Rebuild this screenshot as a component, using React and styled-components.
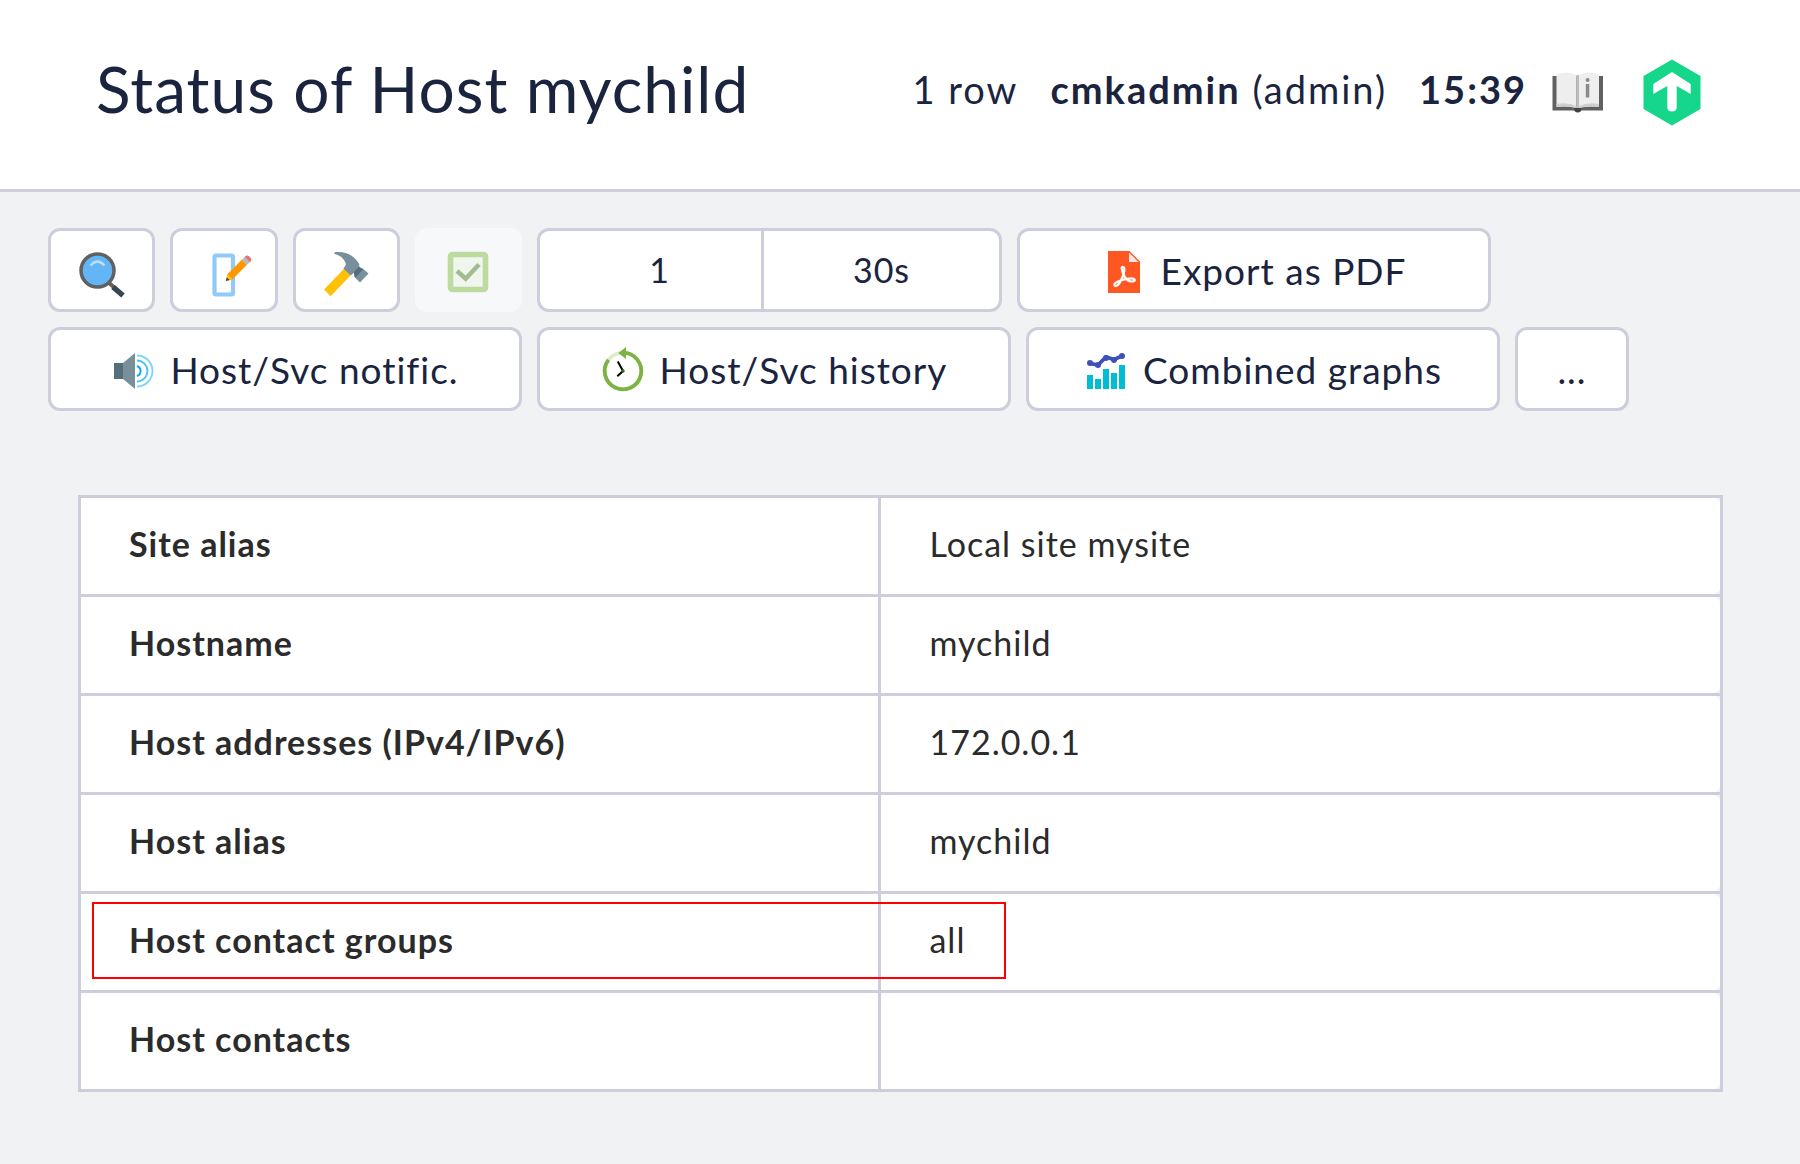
import React from "react";
import styled, { createGlobalStyle } from "styled-components";

const line = "#cdcddc";
const ink = "#1a243e";
const canvas = "#f0f2f4";
const labelColumn = "48.75%";

const GlobalStyle = createGlobalStyle`
  *, *::before, *::after { box-sizing: border-box; }
  body {
    margin: 0;
    background: ${canvas};
    color: ${ink};
    font-family: Lato, "Open Sans", sans-serif;
    font-size: 37px;
    letter-spacing: 1px;
  }
`;

const Header = styled.header`
  display: flex;
  align-items: center;
  justify-content: space-between;
  min-height: 192px;
  padding: 0 99px 12px 96px;
  background: #fff;
  border-bottom: 3px solid ${line};
`;

const Title = styled.h1`
  margin: 0;
  font-size: 64px;
  font-weight: 400;
`;

const HeaderInfo = styled.div`
  display: flex;
  align-items: center;
  gap: 32px;
  font-size: 38px;
  letter-spacing: 2px;
`;

const HeaderIcons = styled.div`
  display: flex;
  align-items: center;
  gap: 38px;
  margin: 8px 0 0 -8px;
`;

const IconLink = styled.a`
  display: flex;
`;

const Toolbar = styled.nav`
  display: flex;
  flex-direction: column;
  gap: 15px;
  padding: 36px 48px 0;
`;

const ToolRow = styled.div`
  display: flex;
  gap: 15px;
`;

const IconGroup = styled.div`
  display: flex;
  gap: 15px;
  width: 474px;
`;

const Button = styled.button`
  display: flex;
  align-items: center;
  justify-content: center;
  gap: 15px;
  height: 84px;
  padding: 0;
  border: 3px solid ${line};
  border-radius: 12px;
  background: #fff;
  color: inherit;
  font: inherit;
  letter-spacing: inherit;
  white-space: nowrap;
`;

const IconButton = styled(Button)`
  flex: 1;
  &:disabled {
    border-color: #f7f8fa;
    background: #f7f8fa;
  }
`;

const WideButton = styled(Button)`
  width: 474px;
`;

const MoreButton = styled(Button)`
  width: 114px;
`;

const Segments = styled.div`
  display: grid;
  grid-template-columns: 221fr 238fr;
  width: 465px;
  height: 84px;
  border: 3px solid ${line};
  border-radius: 12px;
  background: #fff;
  overflow: hidden;
`;

const Segment = styled.button`
  padding: 0 0 2px 18px;
  border: 0;
  background: none;
  color: inherit;
  font: inherit;
  font-size: 34px;
  letter-spacing: inherit;
  & + & {
    padding: 0 0 2px;
    border-left: 3px solid ${line};
  }
`;

const Main = styled.main`
  padding: 84px 77px 72px 78px;
`;

const Table = styled.table`
  width: 100%;
  table-layout: fixed;
  border-collapse: collapse;
  background: #fff;
  color: #2b2b2b;
  font-size: 34px;
  text-align: left;
`;

const Row = styled.tr`
  position: relative;
  height: 99px;
`;

const Label = styled.th`
  width: ${labelColumn};
  padding: 0 48px 6px;
  border: 3px solid ${line};
  font-weight: 700;
`;

const Value = styled.td`
  padding: 0 48px 6px;
  border: 3px solid ${line};
  background:
    radial-gradient(circle at 0 100%, #fff 8px, ${canvas} 9px) top right / 8px 8px no-repeat,
    radial-gradient(circle at 0 0, #fff 8px, ${canvas} 9px) bottom right / 8px 8px no-repeat;
`;

const Marker = styled.span`
  position: absolute;
  top: 9px;
  left: 12px;
  width: calc(${labelColumn} + 114px);
  height: 77px;
  border: 2px solid #f00;
  pointer-events: none;
`;

const Svg = styled.svg`
  display: block;
  flex: none;
  overflow: visible;
`;

const SearchIcon = () => (
  <Svg width="60" height="60" viewBox="0 0 60 60" fill="none">
    <path d="M36 42L44 49" stroke="#616161" strokeWidth="4" />
    <path d="M41 47L51 55.500" stroke="#37474f" strokeWidth="5.500" />
    <circle cx="25.500" cy="30.500" r="16.500" fill="#64b5f6" stroke="#616161" strokeWidth="3.500" />
    <path d="M18.500 25.500Q25.500 17.500 32.500 25.500" stroke="#bbdefb" strokeWidth="2.500" />
  </Svg>
);

const EditIcon = () => (
  <Svg width="60" height="60" viewBox="0 0 60 60">
    <rect x="20.500" y="15.500" width="18.500" height="39" rx="1.500" fill="#fff" stroke="#90caf9" strokeWidth="4.200" />
    <path d="M31.800 41L33.600 34L48 19.600L53 24.800L38.600 39.200Z" fill="#ff9800" />
    <path d="M31.800 41L33.600 34L38.600 39.200Z" fill="#ffc107" />
    <path d="M31.800 41L32.800 37.500L35.600 40Z" fill="#37474f" />
    <path d="M48 19.600L50.600 17L55.800 22.200L53 24.800Z" fill="#b0bec5" />
    <path d="M50.600 17L52 15.800Q53.600 14.800 55 16.200L56.800 18Q58 19.500 57 21L55.800 22.200Z" fill="#e57373" />
  </Svg>
);

const HammerIcon = () => (
  <Svg width="60" height="60" viewBox="0 0 60 60">
    <path d="M8 49.500L14.600 56.300L34.500 35.500L28 28.800Z" fill="#ffc107" />
    <path d="M46 28L52.500 33.500L44 42.400L38 36.500Z" fill="#78909c" />
    <path d="M18.500 12.200C31 11 38 16 43.300 24L43 29L34.500 35.500L27.500 28.800L30 24.300C28 18 24 15.500 18.500 14Z" fill="#78909c" />
    <path d="M43 26.500L47 29.500L39.500 37.500Q37.500 35 38 32Z" fill="#546e7a" />
  </Svg>
);

const CheckIcon = () => (
  <Svg width="60" height="60" viewBox="0 0 60 60" fill="none">
    <rect x="12.500" y="14.500" width="35" height="35" rx="2" fill="#f0f5ee" stroke="#bddb9e" strokeWidth="5.600" />
    <path d="M19 31L27.700 38.700L41 24.500" stroke="#a1bd8f" strokeWidth="4.500" />
  </Svg>
);

const PdfIcon = () => (
  <Svg width="44" height="44" viewBox="0 0 44 44" fill="none">
    <path d="M6 3H27.500L38 13.500V45H6Z" fill="#ff5722" />
    <path d="M27 4.500V14H36.500Z" fill="#fbe9e7" />
    <path d="M21.500 26.500C19 21 19.500 18.800 21 18.800S23 21 21.500 26.500C19.500 32 16 38.500 13.500 38S12.500 34 18.500 32.500C24 31 29 29.500 31.500 30.800S32.500 33.500 30 33.500S24 32 21.500 26.500Z" stroke="#fff" strokeWidth="2.200" strokeLinejoin="round" />
  </Svg>
);

const SpeakerIcon = () => (
  <Svg width="44" height="44" viewBox="0 0 44 44" fill="none">
    <path d="M3 16H12V32H3Z" fill="#546e7a" />
    <path d="M12 16L24 6V42L12 32Z" fill="#78909c" />
    <path d="M26 19A5.300 5.300 0 0 1 26 29" stroke="#03a9f4" strokeWidth="1.900" />
    <path d="M26 13.500A10.500 10.500 0 0 1 26 34.500" stroke="#4fc3f7" strokeWidth="1.900" />
    <path d="M26 8.500A15.500 15.500 0 0 1 26 39.500" stroke="#81d4fa" strokeWidth="1.900" />
  </Svg>
);

const HistoryIcon = () => (
  <Svg width="44" height="44" viewBox="0 0 44 44" fill="none">
    <circle cx="22" cy="24" r="18.300" stroke="#dcedc8" strokeWidth="3.600" />
    <path d="M22 5.700A18.300 18.300 0 1 1 7.500 12.800" stroke="#7cb342" strokeWidth="3.800" />
    <path d="M17.300 6L25 0V12Z" fill="#7cb342" />
    <path d="M16.800 14.500L22 24L16.300 29.300" stroke="#000" strokeWidth="2" />
    <circle cx="22" cy="24" r="1.700" fill="#33691e" />
  </Svg>
);

const GraphIcon = () => (
  <Svg width="44" height="44" viewBox="0 0 44 44">
    <path d="M3 28h6v14H3zM11 32h6v10h-6zM19 22h6v20h-6zM27 26h6v16h-6zM35 18h6v24h-6z" fill="#00bcd4" />
    <path d="M6 16.300L14 18L22 10L30 12.500L38 9" fill="none" stroke="#3f51b5" strokeWidth="3.800" />
    <g fill="#3f51b5">
      <circle cx="6" cy="16" r="3" />
      <circle cx="14" cy="18" r="3" />
      <circle cx="22" cy="11" r="3" />
      <circle cx="30" cy="13" r="3" />
      <circle cx="38" cy="9" r="3" />
    </g>
  </Svg>
);

const BookIcon = () => (
  <Svg width="54" height="44" viewBox="0 0 54 44">
    <path d="M1.500 5H52V39.500H1.500Z" fill="#616161" />
    <path d="M23 37H30.500Q30.500 41.500 26.800 41.500T23 37Z" fill="#424242" />
    <path d="M5.500 3Q17 -.5 25.500 4V37Q17 34 5.500 36Z" fill="#eee" />
    <path d="M48 3Q36.500 -.5 28 4V37Q36.500 34 48 36Z" fill="#eee" />
    <path d="M5.500 33Q17 31 25.500 35V37Q17 35 5.500 36ZM48 33Q36.500 31 28 35V37Q36.500 35 48 36Z" fill="#cfcfcf" />
    <path d="M25.500 4H28V37H25.500Z" fill="#bdbdbd" />
    <path d="M34.800 13H38.300V26.500H34.800Z" fill="#8a8a8a" />
    <circle cx="36.600" cy="9" r="2" fill="#8a8a8a" />
  </Svg>
);

const LogoIcon = () => (
  <Svg width="58" height="68" viewBox="0 0 58 68">
    <path d="M29 .5L57.500 17V50L29 66.500L.5 50V17Z" fill="#15d68a" />
    <path d="M29 13L47.700 25V35L33.700 27V49Q33 52.500 29 52.500T24.300 49V27L10.300 35V25Z" fill="#fff" />
  </Svg>
);

const rows = [
  { label: "Site alias", value: "Local site mysite" },
  { label: "Hostname", value: "mychild" },
  { label: "Host addresses (IPv4/IPv6)", value: "172.0.0.1" },
  { label: "Host alias", value: "mychild" },
  { label: "Host contact groups", value: "all", marked: true },
  { label: "Host contacts", value: "" },
];

export default function App() {
  return (
    <>
      <GlobalStyle />
      <Header>
        <Title>Status of Host mychild</Title>
        <HeaderInfo>
          <span>1 row</span>
          <span><b>cmkadmin</b> (admin)</span>
          <b>15:39</b>
          <HeaderIcons>
            <IconLink href="#manual" aria-label="Manual"><BookIcon /></IconLink>
            <IconLink href="#home" aria-label="Checkmk"><LogoIcon /></IconLink>
          </HeaderIcons>
        </HeaderInfo>
      </Header>
      <Toolbar>
        <ToolRow>
          <IconGroup>
            <IconButton aria-label="Filter"><SearchIcon /></IconButton>
            <IconButton aria-label="Edit view"><EditIcon /></IconButton>
            <IconButton aria-label="Commands"><HammerIcon /></IconButton>
            <IconButton aria-label="Select rows" disabled><CheckIcon /></IconButton>
          </IconGroup>
          <Segments>
            <Segment>1</Segment>
            <Segment>30s</Segment>
          </Segments>
          <WideButton><PdfIcon />Export as PDF</WideButton>
        </ToolRow>
        <ToolRow>
          <WideButton><SpeakerIcon />Host/Svc notific.</WideButton>
          <WideButton><HistoryIcon />Host/Svc history</WideButton>
          <WideButton><GraphIcon />Combined graphs</WideButton>
          <MoreButton>...</MoreButton>
        </ToolRow>
      </Toolbar>
      <Main>
        <Table>
          <tbody>
            {rows.map((row) => (
              <Row key={row.label}>
                <Label scope="row">
                  {row.label}
                  {row.marked && <Marker />}
                </Label>
                <Value>{row.value}</Value>
              </Row>
            ))}
          </tbody>
        </Table>
      </Main>
    </>
  );
}
